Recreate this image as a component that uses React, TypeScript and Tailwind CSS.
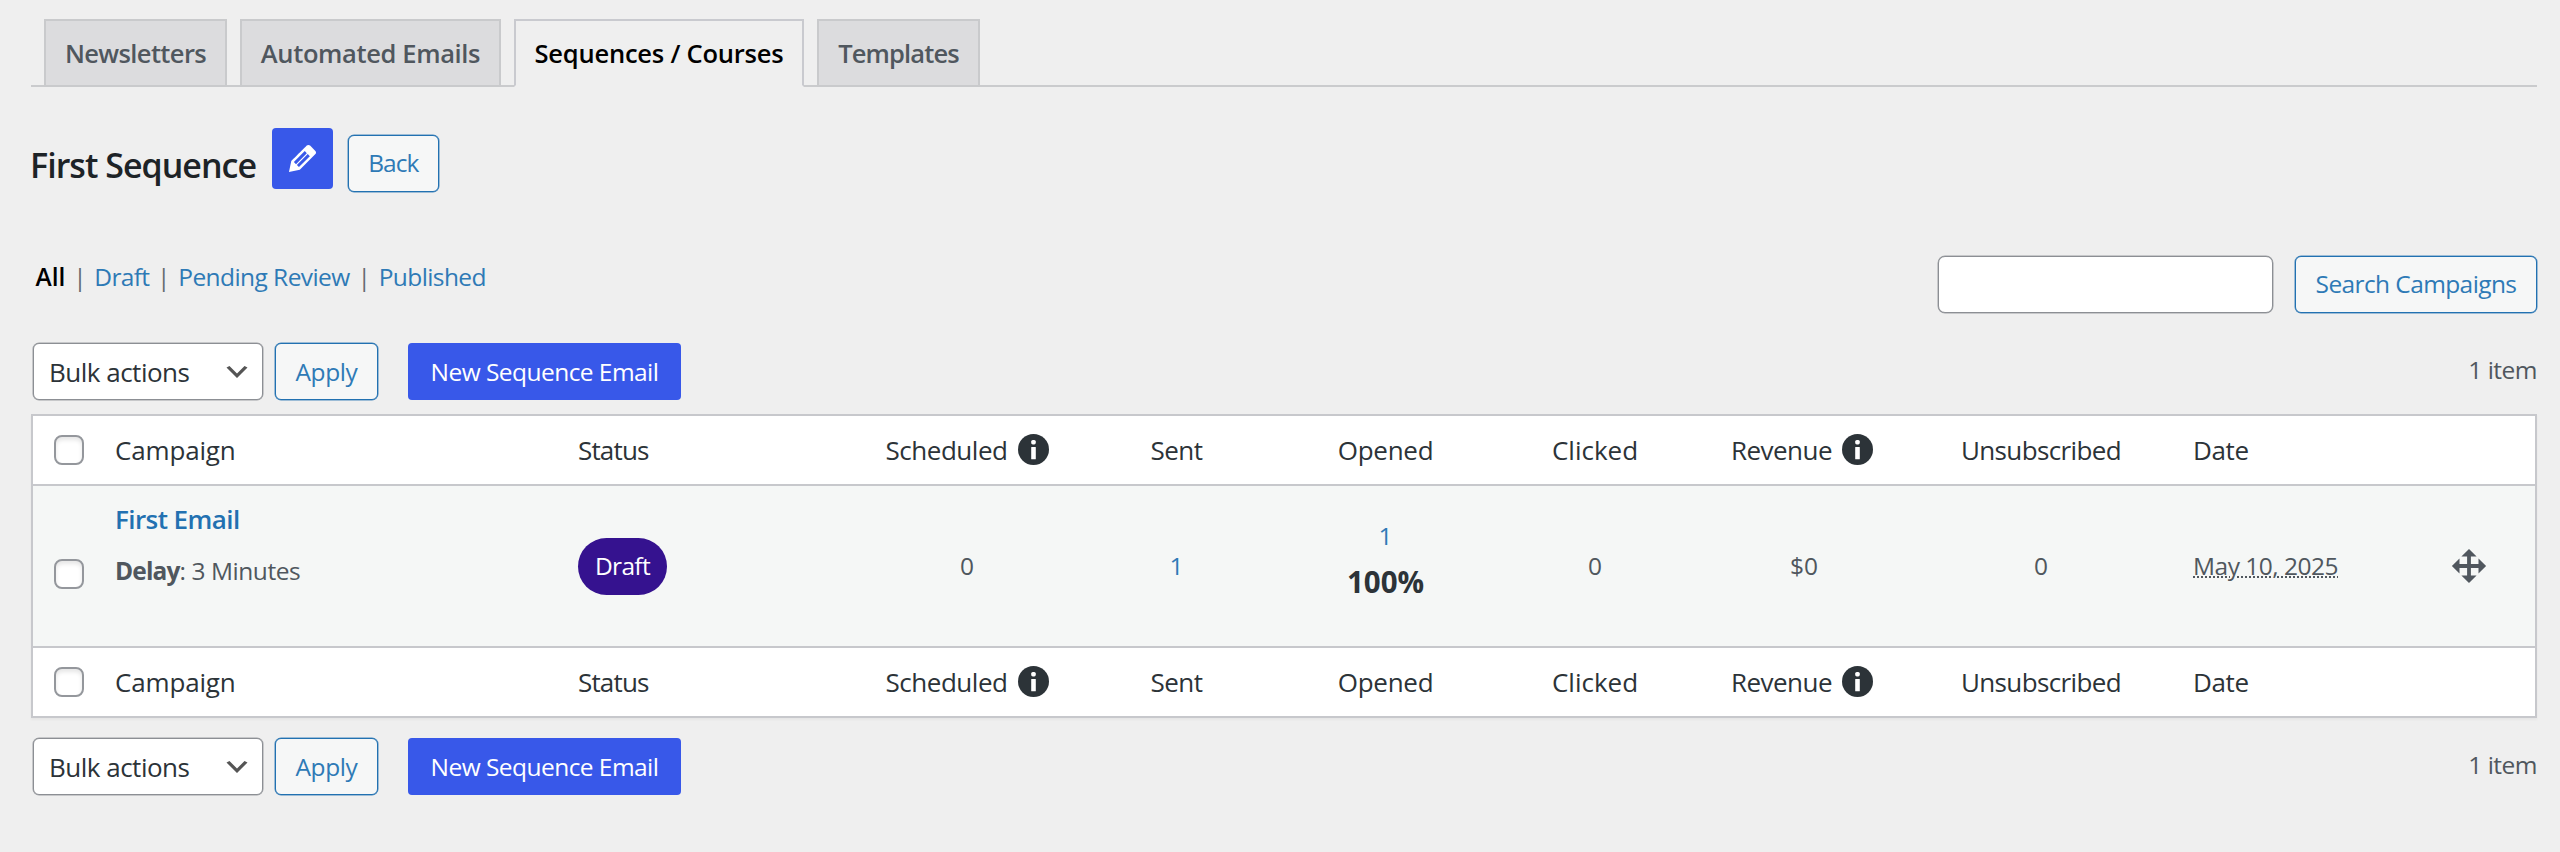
import type { ReactNode } from "react";

const GRID =
  "grid grid-cols-[82px_463px_284px_210px_209px_209px_209px_206px_272px_235px_123px] items-center";

function Tab({ className, children, active }: { className: string; children: ReactNode; active?: boolean }) {
  return (
    <div
      className={
        "flex h-[68px] items-center justify-center border-2 pt-px text-[25.5px] font-semibold " +
        (active
          ? "border-[#c9cacf] border-b-[#efefef] bg-[#efefef] text-black "
          : "border-[#c9cacc] bg-[#dcdcde] text-[#50575e] ") +
        className
      }
    >
      {children}
    </div>
  );
}

function OutlineButton({ className, children }: { className: string; children: ReactNode }) {
  return (
    <button
      className={
        "flex h-[57px] shrink-0 items-center justify-center rounded-[6px] border-[1.5px] border-[#2271b1] bg-[#f6f7f7] text-[24.5px] text-[#2e7ab6] ring-[0.5px] ring-[#2271b1]/80 " +
        className
      }
    >
      {children}
    </button>
  );
}

function Separator() {
  return <span className="w-[29px] text-center text-[#646970]">|</span>;
}

function InfoIcon() {
  return (
    <svg viewBox="0 0 31 31" className="-mt-[2px] size-[31px] shrink-0">
      <circle cx="15.5" cy="15.5" r="15.5" fill="#2c3338" />
      <rect x="13.2" y="6" width="4.6" height="4.4" rx="1.6" fill="#fff" />
      <rect x="13.2" y="13" width="4.6" height="12.2" rx="0.5" fill="#fff" />
    </svg>
  );
}

function Checkbox() {
  return (
    <span className="block size-[30px] rounded-[8px] border-2 border-[#94979c] bg-white shadow-[inset_0_3px_4px_rgba(0,0,0,0.1)]" />
  );
}

function HeadingRow() {
  return (
    <div className={GRID + " h-[68px] bg-white text-[26px] text-[#2c3338]"}>
      <div className="pl-[20.5px]">
        <Checkbox />
      </div>
      <div className="tracking-[-0.16px]">Campaign</div>
      <div className="tracking-[-0.84px]">Status</div>
      <div className="flex items-center justify-center gap-[10px]">
        <span className="tracking-[-0.45px]">Scheduled</span>
        <InfoIcon />
      </div>
      <div className="text-center tracking-[-0.5px]">Sent</div>
      <div className="text-center tracking-[-0.26px]">Opened</div>
      <div className="pl-px text-center">Clicked</div>
      <div className="flex items-center justify-center gap-[10px]">
        <span className="tracking-[-0.52px]">Revenue</span>
        <InfoIcon />
      </div>
      <div className="text-center tracking-[-0.62px]">Unsubscribed</div>
      <div className="pl-4 tracking-[-0.36px]">Date</div>
      <div />
    </div>
  );
}

function CampaignRow() {
  return (
    <div className={GRID + " box-content h-[160px] border-y-2 border-[#c7c8cc] bg-[#f5f7f6] text-[24.5px] text-[#50575e]"}>
      <div className="pt-[15px] pl-[20.5px]">
        <Checkbox />
      </div>
      <div className="flex h-full flex-col pt-[15px]">
        <a className="text-[26px] leading-[36px] font-semibold tracking-[-0.57px] text-[#2271b1]">First Email</a>
        <p className="mt-4 leading-[36px] tracking-[-0.45px]">
          <b className="tracking-[-0.85px]">Delay</b>: 3 Minutes
        </p>
      </div>
      <div>
        <span className="flex h-[57px] w-[89px] items-center justify-center rounded-full bg-[#35128f] tracking-[-0.7px] text-white">
          Draft
        </span>
      </div>
      <div className="text-center">0</div>
      <div className="text-center text-[#2e7ab6]">1</div>
      <div className="flex flex-col items-center pb-2">
        <a className="mb-1.5 leading-[34px] text-[#2e7ab6]">1</a>
        <b className="text-[29.5px] leading-[46px] text-[#2c3338]">100%</b>
      </div>
      <div className="pl-px text-center">0</div>
      <div className="pl-1 text-center">$0</div>
      <div className="text-center">0</div>
      <div className="pl-4">
        <span className="tracking-[-0.5px] underline decoration-dotted decoration-2 underline-offset-[2px]">
          May 10, 2025
        </span>
      </div>
      <div className="pl-[38px]">
        <svg viewBox="0 0 20 20" className="size-[38px]" fill="#50575e">
          <path d="M19 10l-4 4v-3h-4v4h3l-4 4-4-4h3v-4H5v3l-4-4 4-4v3h4V5H6l4-4 4 4h-3v4h4V6z" />
        </svg>
      </div>
    </div>
  );
}

function Toolbar({ className }: { className: string }) {
  return (
    <div className={"flex h-[57px] items-center pl-[2px] " + className}>
      <div className="mr-3 flex h-[57px] w-[230px] items-center justify-between rounded-[6px] border-[1.5px] border-[#8c8f94] bg-white pr-[10px] pl-[15px] ring-[0.5px] ring-[#8c8f94]/80">
        <span className="pt-px text-[26px] tracking-[-0.5px] text-[#2c3338]">Bulk actions</span>
        <svg viewBox="0 0 20 20" className="size-[30px]" fill="#555">
          <path d="M5 6l5 5 5-5 2 1-7 7-7-7z" />
        </svg>
      </div>
      <OutlineButton className="w-[103px] pt-px tracking-[-0.4px]">Apply</OutlineButton>
      <button className="ml-[30px] flex h-[57px] w-[273px] items-center justify-center rounded-[4px] bg-[#3858e9] pt-px text-[24.5px] tracking-[-0.55px] text-white">
        New Sequence Email
      </button>
      <span className="mb-[3px] ml-auto text-[24.5px] tracking-[-0.5px] text-[#50575e]">1 item</span>
    </div>
  );
}

export default function App() {
  return (
    <div className="h-[852px] w-[2560px] overflow-hidden bg-[#efefef] pt-[19px] pr-[23px] pl-[31px] font-['Open_Sans','Noto_Sans',sans-serif] whitespace-nowrap">
      <nav className="flex h-[68px] gap-[13px] border-b-2 border-[#cacbcd] pl-[13px]">
        <Tab className="w-[183px] tracking-[-0.62px]">Newsletters</Tab>
        <Tab className="w-[261px] tracking-[-0.36px]">Automated Emails</Tab>
        <Tab className="w-[290px] tracking-[-0.22px]" active>
          Sequences / Courses
        </Tab>
        <Tab className="w-[163px] tracking-[-0.85px]">Templates</Tab>
      </nav>

      <header className="mt-[41px] flex h-[64px] items-start">
        <h1 className="mt-[15px] -ml-px w-[242px] text-[34px] leading-[44px] font-semibold tracking-[-0.98px] text-[#1d2327]">
          First Sequence
        </h1>
        <button className="flex size-[61px] items-center justify-center rounded-[4px] bg-[#3858e9]">
          <svg viewBox="0 0 20 20" className="size-[39px]" fill="#fff">
            <path d="M13.89 3.39l2.71 2.72c.46.46.42 1.24.03 1.64l-8.01 8.02-5.56 1.16 1.16-5.58s7.6-7.63 7.99-8.03c.39-.39 1.22-.39 1.68.07zm-2.73 2.79l-5.59 5.61 1.11 1.11 5.54-5.65zm-2.97 8.23l5.58-5.6-1.07-1.08-5.59 5.6z" />
          </svg>
        </button>
        <OutlineButton className="mt-[6.5px] ml-[14.5px] w-[91.5px] tracking-[-1px]">Back</OutlineButton>
      </header>

      <section className="mt-[63.5px] flex h-[58px] items-start">
        <div className="flex pl-[4.5px] text-[24.5px] leading-[42px] text-[#2e7ab6]">
          <a className="font-semibold text-black">All</a>
          <Separator />
          <a className="tracking-[-0.7px]">Draft</a>
          <Separator />
          <a className="tracking-[-0.57px]">Pending Review</a>
          <Separator />
          <a className="tracking-[-0.6px]">Published</a>
        </div>
        <input
          type="search"
          className="ml-auto h-[57.5px] w-[334.5px] rounded-[7px] border-[1.5px] border-[#8c8f94] bg-white ring-[0.5px] ring-[#8c8f94]/80"
        />
        <OutlineButton className="ml-[22.5px] w-[242px] tracking-[-0.6px]">Search Campaigns</OutlineButton>
      </section>

      <Toolbar className="mt-[29.5px]" />

      <main className="mt-[14px] border-2 border-[#c7c8cc] shadow-[0_2px_2px_rgba(0,0,0,0.04)]">
        <HeadingRow />
        <CampaignRow />
        <HeadingRow />
      </main>

      <Toolbar className="mt-[20px]" />
    </div>
  );
}
